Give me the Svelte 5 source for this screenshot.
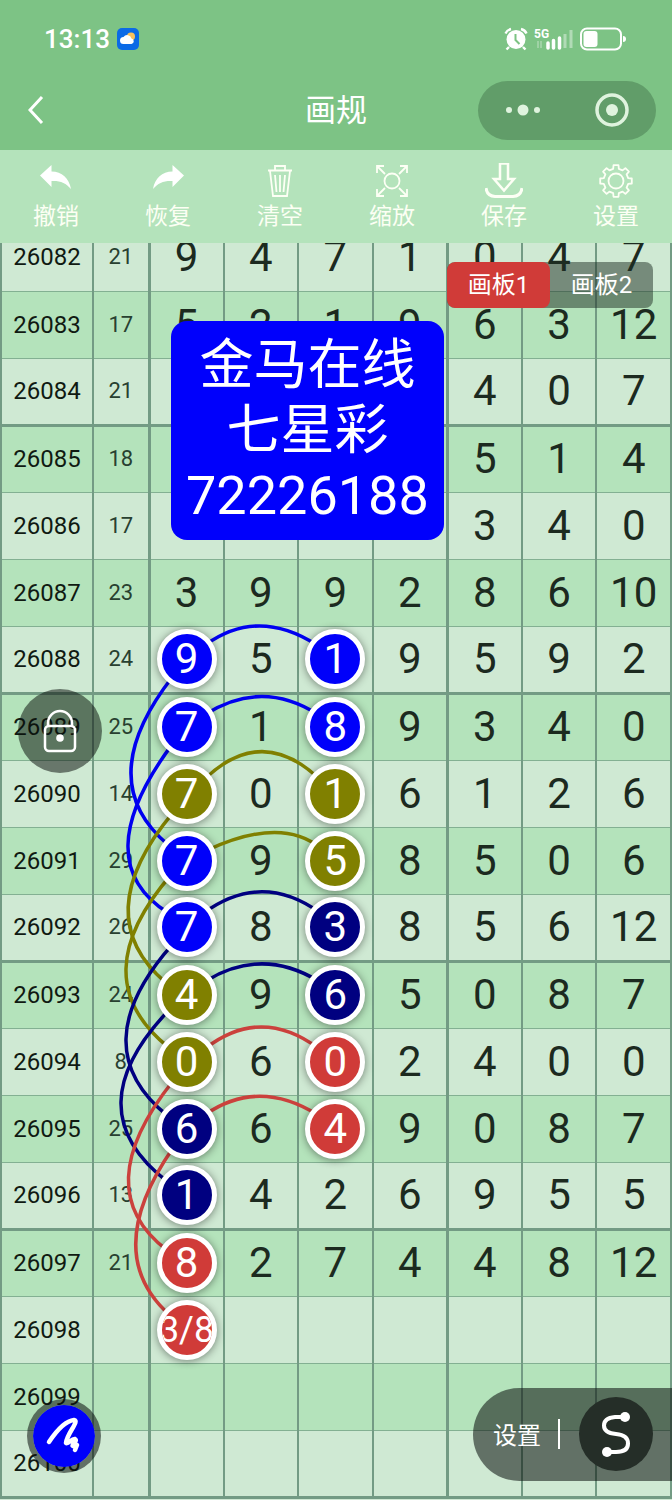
<script lang="ts">
  type Mark = { color: string; text?: string };

  const rows = [
    { issue: 26082, sum: 21, balls: [9, 4, 7, 1, 0, 4, 7] },
    { issue: 26083, sum: 17, balls: [5, 2, 1, 9, 6, 3, 12] },
    { issue: 26084, sum: 21, balls: ['', '', '', '', 4, 0, 7] },
    { issue: 26085, sum: 18, balls: ['', '', '', '', 5, 1, 4] },
    { issue: 26086, sum: 17, balls: ['', '', '', '', 3, 4, 0] },
    { issue: 26087, sum: 23, balls: [3, 9, 9, 2, 8, 6, 10] },
    { issue: 26088, sum: 24, balls: [9, 5, 1, 9, 5, 9, 2] },
    { issue: 26089, sum: 25, balls: [7, 1, 8, 9, 3, 4, 0] },
    { issue: 26090, sum: 14, balls: [7, 0, 1, 6, 1, 2, 6] },
    { issue: 26091, sum: 29, balls: [7, 9, 5, 8, 5, 0, 6] },
    { issue: 26092, sum: 26, balls: [7, 8, 3, 8, 5, 6, 12] },
    { issue: 26093, sum: 24, balls: [4, 9, 6, 5, 0, 8, 7] },
    { issue: 26094, sum: 8, balls: [0, 6, 0, 2, 4, 0, 0] },
    { issue: 26095, sum: 25, balls: [6, 6, 4, 9, 0, 8, 7] },
    { issue: 26096, sum: 13, balls: [1, 4, 2, 6, 9, 5, 5] },
    { issue: 26097, sum: 21, balls: [8, 2, 7, 4, 4, 8, 12] },
    { issue: 26098, sum: '', balls: ['', '', '', '', '', '', ''] },
    { issue: 26099, sum: '', balls: ['', '', '', '', '', '', ''] },
    { issue: 26100, sum: '', balls: ['', '', '', '', '', '', ''] }
  ];

  // keyed by issue-column
  const marks: Record<string, Mark> = {
    '26088-0': { color: 'blue' },
    '26088-2': { color: 'blue' },
    '26089-0': { color: 'blue' },
    '26089-2': { color: 'blue' },
    '26090-0': { color: 'olive' },
    '26090-2': { color: 'olive' },
    '26091-0': { color: 'blue' },
    '26091-2': { color: 'olive' },
    '26092-0': { color: 'blue' },
    '26092-2': { color: 'navy' },
    '26093-0': { color: 'olive' },
    '26093-2': { color: 'navy' },
    '26094-0': { color: 'olive' },
    '26094-2': { color: 'red' },
    '26095-0': { color: 'navy' },
    '26095-2': { color: 'red' },
    '26096-0': { color: 'navy' },
    '26097-0': { color: 'red' },
    '26098-0': { color: 'red', text: '3/8' }
  };

  const curves = [
    { color: 'blue', d: 'M206 644Q258 607 316 644' },
    { color: 'blue', d: 'M205 714Q262 678 318 714' },
    { color: 'blue', d: 'M172 677Q92 780 168 844' },
    { color: 'blue', d: 'M172 744Q86 860 168 912' },
    { color: 'olive', d: 'M204 779Q262 723 320 779' },
    { color: 'olive', d: 'M206 850Q281 815 320 847' },
    { color: 'olive', d: 'M173 812Q87 915 166 982' },
    { color: 'olive', d: 'M172 873Q82 976 168 1046' },
    { color: 'navy', d: 'M204 912Q262 870 320 912' },
    { color: 'navy', d: 'M206 980Q262 946 318 980' },
    { color: 'navy', d: 'M172 944Q82 1046 168 1115' },
    { color: 'navy', d: 'M172 1006Q72 1108 168 1181' },
    { color: 'red', d: 'M206 1047Q261 1005 318 1047' },
    { color: 'red', d: 'M206 1113Q259 1077 318 1114' },
    { color: 'red', d: 'M173 1080Q87 1188 167 1249' },
    { color: 'red', d: 'M173 1147Q100 1252 170 1314' }
  ];

  const tools = [
    { id: 'undo', label: '撤销' },
    { id: 'redo', label: '恢复' },
    { id: 'clear', label: '清空' },
    { id: 'zoom', label: '缩放' },
    { id: 'save', label: '保存' },
    { id: 'config', label: '设置' }
  ];

  let board = $state(1);

  // settings gear: eight teeth, four corners each
  const gear = Array.from({ length: 8 }, (_, i) =>
    [[-13, 12.5], [-9, 16], [9, 16], [13, 12.5]]
      .map(([offset, r]) => {
        const a = ((i * 45 + offset) * Math.PI) / 180;
        return `${(17 + r * Math.cos(a)).toFixed(1)},${(17 + r * Math.sin(a)).toFixed(1)}`;
      })
      .join(' ')
  ).join(' ');
</script>

<div class="page">
  <header>
    <div class="status">
      <span class="clock">13:13</span>
      <svg class="weather" width="22" height="22" viewBox="0 0 22 22">
        <rect width="22" height="22" rx="5" fill="#0b6ae6" />
        <circle cx="14" cy="8.500" r="4" fill="#fbc25c" />
        <path d="M6.500 16a3.500 3.500 0 0 1 0-7 4.500 4.500 0 0 1 8 1.500 2.800 2.800 0 0 1 0 5.500z" fill="#fff" />
      </svg>
      <svg class="alarm" width="24" height="24" viewBox="0 0 24 24">
        <circle cx="12" cy="12.500" r="9.500" fill="#fff" />
        <path d="M1.500 6.500Q3 3 7 2M17 2q4 1 5.500 4.500M5 20l-2.500 2.500M19 20l2.500 2.500" stroke="#fff" stroke-width="2.400" fill="none" />
        <path d="M11.500 7v6l4 4" stroke="#7dc383" stroke-width="2" fill="none" />
      </svg>
      <svg class="signal" width="40" height="24" viewBox="0 0 40 24">
        <text x="0" y="11" font-size="12" font-weight="700" fill="#fff">5G</text>
        <path d="M4 14v7M7 14v7" stroke="#fff" stroke-opacity=".35" stroke-width="1.500" />
        <path d="M14 16v5M19.500 13.500v7.500M25.500 11v10" stroke="#fff" stroke-width="3.500" stroke-linecap="round" />
        <path d="M31 7v14M37 3v18" stroke="#fff" stroke-opacity=".4" stroke-width="3" />
      </svg>
      <svg class="battery" width="46" height="24" viewBox="0 0 46 24">
        <rect x="1" y="1.500" width="40" height="21" rx="6" fill="none" stroke="#fff" stroke-width="2" />
        <rect x="3.500" y="4" width="14" height="16" rx="3" fill="#fff" />
        <path d="M43 9q3 0 3 3t-3 3z" fill="#fff" />
      </svg>
    </div>
    <div class="nav">
      <button class="back" aria-label="返回">
        <svg width="16" height="30" viewBox="0 0 16 30"><path d="M14 2L2 15l12 13" fill="none" stroke="#fff" stroke-width="3" /></svg>
      </button>
      <h1>画规</h1>
      <div class="capsule">
        <button aria-label="更多">
          <svg width="36" height="36" viewBox="0 0 36 36" fill="#dff3de"><circle cx="4" cy="18" r="3" /><circle cx="18" cy="18" r="5.500" /><circle cx="32" cy="18" r="3" /></svg>
        </button>
        <button aria-label="关闭">
          <svg width="36" height="36" viewBox="0 0 36 36"><circle cx="18" cy="18" r="15" fill="none" stroke="#dff3de" stroke-width="3.500" /><circle cx="18" cy="18" r="6" fill="#dff3de" /></svg>
        </button>
      </div>
    </div>
  </header>

  <nav class="toolbar">
    {#each tools as tool}
      <button>
        <svg width="38" height="36" viewBox="-2 -1 38 36" fill="none" stroke="#fdfff5" stroke-width="1.800">
          {#if tool.id === 'undo'}
            <path d="M1 11.500L12.500 1v6.500C23 7.500 30 14 32 25c-5-6-11-8.500-19.500-8V23z" fill="#fff" stroke="none" />
          {:else if tool.id === 'redo'}
            <path d="M33 11.500L21.500 1v6.500C11 7.500 4 14 2 25c5-6 11-8.500 19.500-8V23z" fill="#fff" stroke="none" />
          {:else if tool.id === 'clear'}
            <path d="M5 6.500h24M12 6V2h10v4M7 7l3 25h14l3-25M12 11l1.500 17M17 11v17M22 11l-1.500 17" />
          {:else if tool.id === 'zoom'}
            <circle cx="17" cy="17" r="7.500" />
            <path d="M10 10L2 2M2 9V2h7M24 10l8-8M25 2h7v7M10 24l-8 8M2 25v7h7M24 24l8 8M32 25v7h-7" />
          {:else if tool.id === 'save'}
            <path d="M13 -.500h8V15h6L17 26.500 7 15h6z" stroke-width="2.500" />
            <path d="M-1 24q1 8 9 8.500h18q8-.500 9-8.500" stroke-width="3" />
          {:else}
            <polygon points={gear} stroke-linejoin="round" />
            <circle cx="17" cy="17" r="7.500" />
          {/if}
        </svg>
        <span>{tool.label}</span>
      </button>
    {/each}
  </nav>

  <main class="board">
    <table>
      <colgroup>
        <col class="col-issue" />
        <col class="col-sum" />
        {#each { length: 7 } as _}
          <col />
        {/each}
      </colgroup>
      <tbody>
        {#each rows as row}
          <tr class:group-end={row.issue % 4 === 0}>
            <th scope="row">{row.issue}</th>
            <td class="sum">{row.sum}</td>
            {#each row.balls as ball, col}
              {@const mark = marks[`${row.issue}-${col}`]}
              <td class:section={col === 0 || col === 4}>
                {#if mark}
                  <span class="mark {mark.color}" class:pair={mark.text}>{mark.text ?? ball}</span>
                {:else}
                  {ball}
                {/if}
              </td>
            {/each}
          </tr>
        {/each}
      </tbody>
    </table>

    <svg class="curves" viewBox="0 243 672 1254" preserveAspectRatio="none">
      {#each curves as curve}
        <path class={curve.color} d={curve.d} />
      {/each}
    </svg>

    <div class="tabs">
      <button class:active={board === 1} onclick={() => (board = 1)}>画板1</button>
      <button class:active={board === 2} onclick={() => (board = 2)}>画板2</button>
    </div>

    <div class="note">
      <div>金马在线</div>
      <div>七星彩</div>
      <div>72226188</div>
    </div>

    <button class="lock" aria-label="锁定">
      <svg width="36" height="46" viewBox="0 0 36 46">
        <rect x="3" y="18" width="30" height="25" rx="4" fill="none" stroke="#fff" stroke-width="2.500" />
        <path d="M6 18v-3a12 12 0 0 1 24 0v3" fill="none" stroke="#fff" stroke-width="2.500" />
        <circle cx="18" cy="30" r="3.800" fill="#fff" />
      </svg>
    </button>

    <button class="pen" aria-label="画笔">
      <svg width="38" height="40" viewBox="0 0 38 40">
        <path d="M4 26C10 17 19 5 29 4c6 1-7 13-8 23 2 2 6-5 9-4 3 2-4 6-2 7l4-1-2 5" fill="none" stroke="#fff" stroke-width="4.500" stroke-linecap="round" stroke-linejoin="round" />
      </svg>
    </button>

    <div class="dock">
      <button class="dock-set">设置</button>
      <button class="dock-line" aria-label="连线">
        <svg width="30" height="46" viewBox="0 0 30 46">
          <path d="M23 6H14Q3 7 3 14.500T15 23t12 9.500T15 41H7" fill="none" stroke="#fff" stroke-width="4" />
          <circle cx="24" cy="6" r="5" fill="#fff" />
          <circle cx="6" cy="41" r="5" fill="#fff" />
        </svg>
      </button>
    </div>
  </main>
</div>

<style>
  :global(body) {
    margin: 0;
    background: #cfe9d3;
  }
  .page {
    min-height: 100vh;
    overflow: hidden;
    font-family: Roboto, 'Noto Sans CJK SC', sans-serif;
    color: #1c2a1f;
  }
  button {
    display: flex;
    align-items: center;
    justify-content: center;
    margin: 0;
    padding: 0;
    border: none;
    background: none;
    font: inherit;
    color: #fff;
    cursor: pointer;
  }

  header {
    background: #7dc385;
    color: #fff;
  }
  .status {
    display: flex;
    align-items: center;
    height: 70px;
    padding: 8px 46px 0 44px;
    box-sizing: border-box;
  }
  .clock {
    font-size: 26px;
    font-weight: 500;
  }
  .weather {
    margin-left: 7px;
  }
  .alarm {
    margin-left: auto;
  }
  .signal {
    margin: 0 6px;
  }
  .nav {
    display: grid;
    grid-template-columns: 1fr auto 1fr;
    align-items: center;
    height: 80px;
    padding: 0 16px;
  }
  .back {
    justify-self: start;
    margin-left: 12px;
  }
  h1 {
    margin: 0;
    padding-bottom: 6px;
    font-size: 31px;
    font-weight: 400;
  }
  .capsule {
    display: flex;
    justify-self: end;
    justify-content: space-around;
    width: 178px;
    height: 59px;
    border-radius: 30px;
    background: #619d69;
  }

  .toolbar {
    display: grid;
    grid-template-columns: repeat(6, 1fr);
    height: 93px;
    background: #b4e3bb;
  }
  .toolbar button {
    flex-direction: column;
    gap: 4px;
    font-size: 23px;
    line-height: 28px;
    color: #fcfff4;
  }

  .board {
    position: relative;
    overflow: hidden;
  }
  table {
    width: 100%;
    margin-top: -19px;
    table-layout: fixed;
    border-collapse: collapse;
    border-left: 2px solid #739b84;
    font-size: 42px;
    text-align: center;
  }
  .col-issue {
    width: 92px;
  }
  .col-sum {
    width: 56px;
  }
  tr {
    height: 67px;
    background: #cfe9d3;
  }
  tr:nth-child(even) {
    background: #b4e3bb;
  }
  th,
  td {
    padding: 0;
    border-right: 2px solid #739b84;
    border-bottom: 1px solid #83b092;
    line-height: 48px;
  }
  th {
    font-size: 24px;
    font-weight: 400;
    color: #101a12;
  }
  .sum {
    font-size: 22px;
    color: #284030;
  }
  .section {
    border-left: 3px solid #739b84;
  }
  .group-end th,
  .group-end td {
    border-bottom: 3px solid #739b84;
  }

  .mark {
    position: relative;
    z-index: 2;
    display: flex;
    align-items: center;
    justify-content: center;
    width: 60px;
    height: 60px;
    margin: 0 auto;
    box-sizing: border-box;
    overflow: hidden;
    border: 5px solid #fff;
    border-radius: 50%;
    box-shadow: 0 1px 8px rgba(0, 0, 0, 0.45);
    color: #fff;
  }
  .pair {
    font-size: 36px;
  }
  .mark.blue {
    background: #0000fa;
  }
  .mark.olive {
    background: #808000;
  }
  .mark.navy {
    background: #000080;
  }
  .mark.red {
    background: #d03b38;
  }

  .curves {
    position: absolute;
    top: 0;
    left: 0;
    z-index: 1;
    width: 100%;
    height: 100%;
    pointer-events: none;
  }
  .curves path {
    fill: none;
    stroke-width: 3.5px;
    vector-effect: non-scaling-stroke;
  }
  .curves .blue {
    stroke: #0000f0;
  }
  .curves .olive {
    stroke: #808000;
  }
  .curves .navy {
    stroke: #000080;
  }
  .curves .red {
    stroke: #cb413c;
  }

  .tabs {
    position: absolute;
    top: 19px;
    right: 19px;
    z-index: 3;
    display: flex;
    overflow: hidden;
    border-radius: 8px;
    background: rgba(30, 45, 35, 0.5);
  }
  .tabs button {
    width: 103px;
    height: 46px;
    padding-bottom: 6px;
    font-size: 24px;
  }
  .tabs .active {
    border-radius: 8px;
    background: #d03b38;
  }

  .note {
    position: absolute;
    top: 78px;
    left: 171px;
    z-index: 3;
    padding: 12px 15px;
    border-radius: 16px;
    background: #0000fc;
    color: #fff;
    font-size: 54px;
    line-height: 65px;
    text-align: center;
  }

  .lock,
  .pen,
  .dock {
    position: absolute;
    z-index: 3;
  }
  .lock {
    top: 446px;
    left: 18px;
    width: 84px;
    height: 84px;
    border-radius: 50%;
    background: rgba(10, 15, 12, 0.52);
  }
  .pen {
    bottom: 26px;
    left: 27px;
    width: 74px;
    height: 74px;
    box-sizing: border-box;
    border: 6px solid rgba(10, 15, 12, 0.55);
    border-radius: 50%;
    background: #0000fa;
    background-clip: padding-box;
  }
  .dock {
    right: 0;
    bottom: 18px;
    display: flex;
    align-items: center;
    padding: 9px 19px 10px 20px;
    border-radius: 47px 0 0 47px;
    background: rgba(10, 15, 12, 0.55);
  }
  .dock-set {
    height: 30px;
    padding-right: 17px;
    border-right: 2px solid #fff;
    font-size: 24px;
  }
  .dock-line {
    width: 74px;
    height: 74px;
    margin-left: 19px;
    border-radius: 50%;
    background: #252e28;
  }
</style>
